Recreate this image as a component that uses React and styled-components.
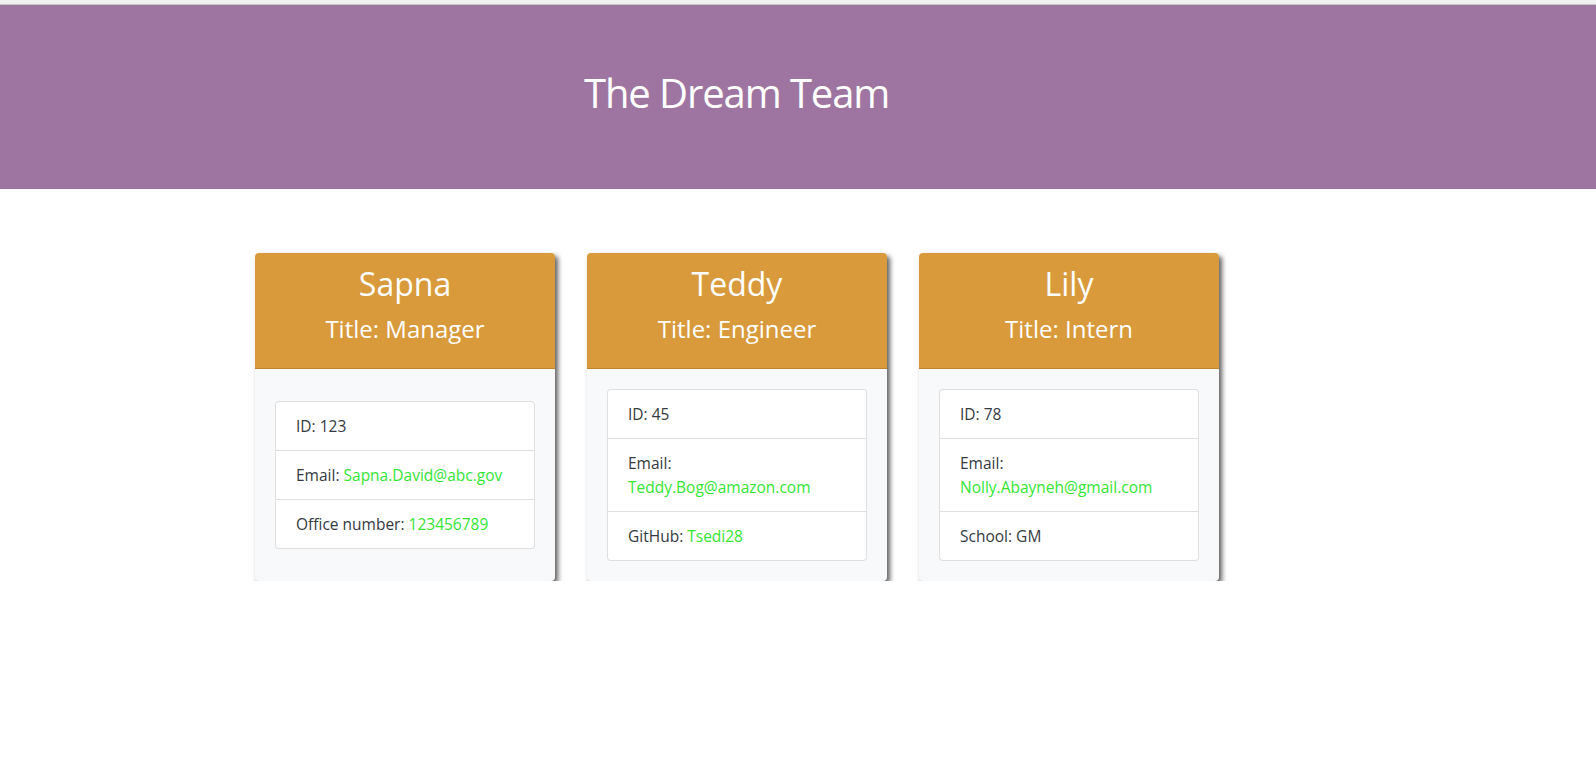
import React from "react";
import styled, {createGlobalStyle} from "styled-components";

const GlobalStyle = createGlobalStyle`
  html, body {
    margin: 0;
    padding: 0;
    background: #fff;
  }
  body {
    font-family: "Open Sans", "Noto Sans", sans-serif;
    font-size: 16px;
    line-height: 1.5;
    color: #343a40;
  }
  * {
    box-sizing: border-box;
  }
`;

const TopStrip = styled.div`
  height: 5px;
  background: #f1f1f1;
  border-bottom: 1px solid #c8c8c8;
`;

const Jumbotron = styled.header`
  background: #9e75a0;
  padding: 64px 0;
  margin-bottom: 64px;
`;

const Container = styled.div`
  width: 1110px;
  margin: 0 auto;
`;

const Heading = styled.h1`
  margin: 0 0 8px 341px;
  font-size: 40px;
  font-weight: 400;
  line-height: 48px;
  color: #fff;
  letter-spacing: -1.1px;
`;

const CardRow = styled.div`
  display: flex;
  align-items: stretch;
  gap: 32px;
  padding-left: 12px;
`;

const Card = styled.div`
  width: 300px;
  display: flex;
  flex-direction: column;
  border-radius: 4px;
  background: #f8f9fa;
  box-shadow: 3px 3px 5px rgba(40, 40, 40, 0.75);
  overflow: hidden;
`;

const CardHeader = styled.div`
  background: #d89a3b;
  border-bottom: 1px solid #c0842c;
  color: #fff;
  text-align: center;
  padding: 12px 20px 25px;
`;

const Name = styled.h2`
  margin: 0 0 11px;
  font-size: 32px;
  font-weight: 400;
  line-height: 38px;
`;

const Role = styled.h4`
  margin: 0;
  font-size: 24px;
  font-weight: 400;
  line-height: 29px;
`;

const CardBody = styled.div`
  flex: 1;
  display: flex;
  flex-direction: column;
  justify-content: center;
  padding: 20px;
`;

const List = styled.ul`
  list-style: none;
  margin: 0;
  padding: 0;
  background: #fff;
  border: 1px solid rgba(0, 0, 0, 0.125);
  border-radius: 4px;
`;

const Item = styled.li`
  padding: 12px 20px;
  font-size: 15.5px;
  line-height: 24px;
  white-space: ${props => props.$nowrap ? "nowrap" : "normal"};

  & + & {
    border-top: 1px solid rgba(0, 0, 0, 0.125);
  }
`;

const Value = styled.span`
  color: #33e633;
  display: ${props => props.$block ? "block" : "inline"};
`;

const team = [
    {
        name: "Sapna",
        role: "Manager",
        rows: [
            {label: "ID", value: "123", plain: true},
            {label: "Email", value: "Sapna.David@abc.gov", nowrap: true},
            {label: "Office number", value: "123456789"}
        ]
    },
    {
        name: "Teddy",
        role: "Engineer",
        rows: [
            {label: "ID", value: "45", plain: true},
            {label: "Email", value: "Teddy.Bog@amazon.com", block: true},
            {label: "GitHub", value: "Tsedi28"}
        ]
    },
    {
        name: "Lily",
        role: "Intern",
        rows: [
            {label: "ID", value: "78", plain: true},
            {label: "Email", value: "Nolly.Abayneh@gmail.com", block: true},
            {label: "School", value: "GM", plain: true}
        ]
    }
];

const EmployeeCard = ({name, role, rows}) => (
    <Card>
        <CardHeader>
            <Name>{name}</Name>
            <Role>Title: {role}</Role>
        </CardHeader>
        <CardBody>
            <List>
                {rows.map(row => (
                    <Item key={row.label} $nowrap={row.nowrap}>
                        {row.label}:{" "}
                        {row.plain ? row.value : <Value $block={row.block}>{row.value}</Value>}
                    </Item>
                ))}
            </List>
        </CardBody>
    </Card>
);

export default function App() {
    return (
        <>
            <GlobalStyle/>
            <TopStrip/>
            <Jumbotron>
                <Container>
                    <Heading>The Dream Team</Heading>
                </Container>
            </Jumbotron>
            <Container>
                <CardRow>
                    {team.map(member => <EmployeeCard key={member.name} {...member}/>)}
                </CardRow>
            </Container>
        </>
    );
}
